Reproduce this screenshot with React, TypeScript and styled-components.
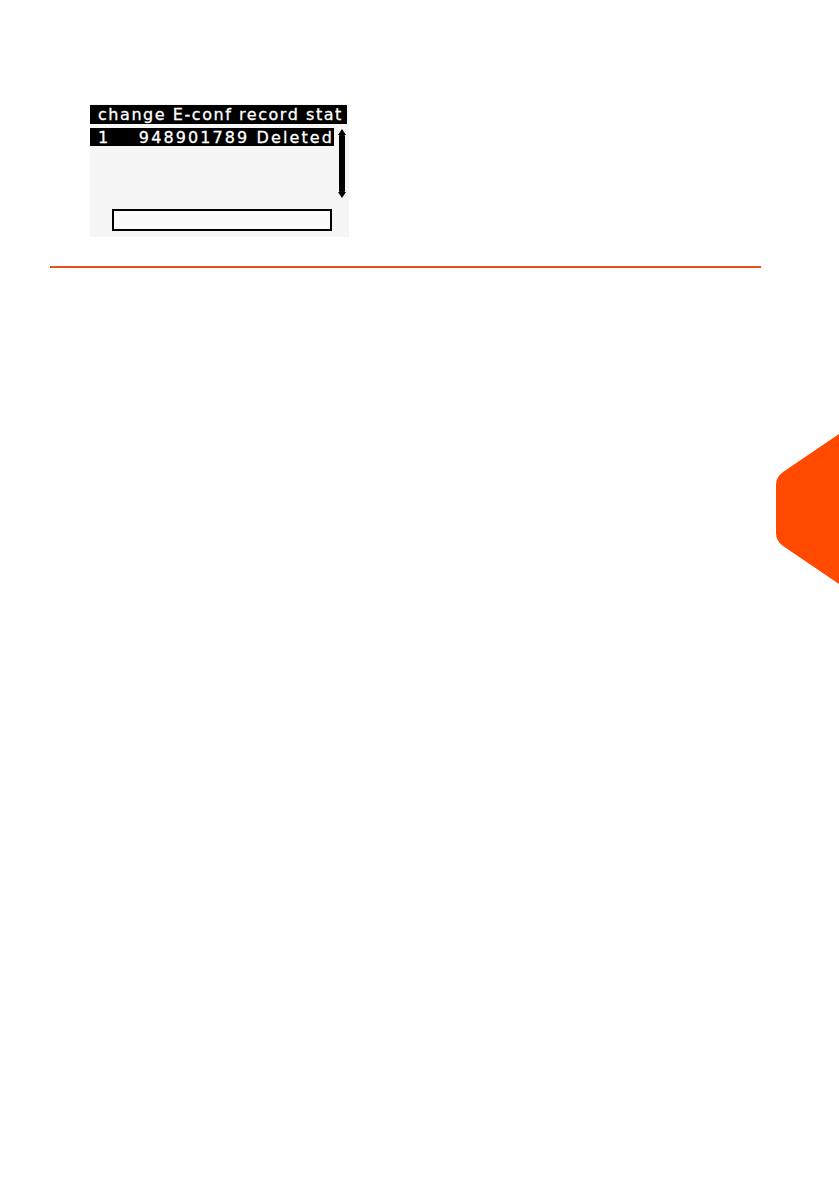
import styled, { createGlobalStyle } from "styled-components";

const GlobalStyle = createGlobalStyle`
  html, body {
    margin: 0;
    padding: 0;
    background: #ffffff;
  }

  body {
    font-family: "DejaVu Sans", "Liberation Sans", sans-serif;
  }
`;

const Page = styled.div`
  position: relative;
  width: 839px;
  min-height: 1191px;
  overflow: hidden;
  padding-top: 104px;
  box-sizing: border-box;
`;

const Screen = styled.div`
  margin-left: 90px;
  width: 259px;
  height: 133px;
  background: #f5f5f5;
  padding: 1px 2px 0 0;
  box-sizing: border-box;
  display: flex;
  flex-direction: column;
`;

const TitleBar = styled.div`
  height: 19px;
  background: #000;
  color: #fff;
  font-size: 16px;
  line-height: 19px;
  letter-spacing: 1.55px;
  padding-left: 8px;
  white-space: nowrap;
  overflow: hidden;
  -webkit-text-stroke: 0.3px #fff;
`;

const ListArea = styled.div`
  display: flex;
  margin-top: 4px;
  gap: 3px;
`;

const Rows = styled.div`
  flex: 1;
`;

const Row = styled.div<{ $selected?: boolean }>`
  height: 18px;
  display: flex;
  justify-content: space-between;
  align-items: center;
  padding: 0 0 0 8px;
  background: ${(p) => (p.$selected ? "#000" : "transparent")};
  color: ${(p) => (p.$selected ? "#fff" : "#000")};
  font-size: 16px;
  letter-spacing: 2.1px;
  white-space: nowrap;
  -webkit-text-stroke: 0.3px currentColor;
`;

const ScrollBar = styled.svg`
  width: 10px;
  height: 72px;
  flex: none;
  margin-top: 1px;
`;

const InputBox = styled.div`
  margin: auto 0 6px 22px;
  width: 220px;
  height: 22px;
  box-sizing: border-box;
  border: 2px solid #000;
  background: #fbfbfb;
`;

const Rule = styled.div`
  margin: 29px 0 0 50px;
  width: 711px;
  height: 2px;
  background: #e8501c;
`;

const SideTab = styled.svg`
  position: absolute;
  right: 0;
  top: 432px;
  width: 63px;
  height: 154px;
`;

function App() {
  return (
    <>
      <GlobalStyle />
      <Page>
        <Screen>
          <TitleBar>change E-conf record stat</TitleBar>
          <ListArea>
            <Rows>
              <Row $selected>
                <span>1</span>
                <span>948901789 Deleted</span>
              </Row>
            </Rows>
            <ScrollBar viewBox="0 0 10 72">
              <path d="M5 0 L9 6 L1 6 Z" fill="#000" />
              <rect x="2" y="6" width="6" height="57" rx="1" fill="#000" />
              <path d="M1 63 L9 63 L5 69 Z" fill="#000" />
            </ScrollBar>
          </ListArea>
          <InputBox />
        </Screen>
        <Rule />
        <SideTab viewBox="0 0 63 154">
          <path
            d="M63 2 L7 40 Q0 45 0 53 L0 101 Q0 109 7 114 L63 152 Z"
            fill="#ff4a00"
          />
        </SideTab>
      </Page>
    </>
  );
}

export default App;
